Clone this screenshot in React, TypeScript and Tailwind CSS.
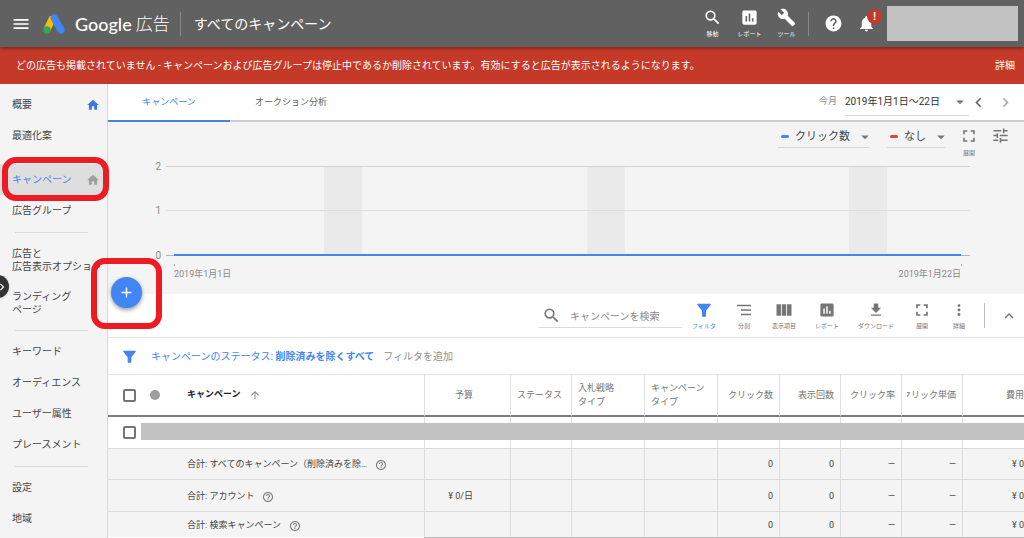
import React from "react";
import {
  MdAdd,
  MdArrowDropDown,
  MdArrowUpward,
  MdAssessment,
  MdBuild,
  MdChevronLeft,
  MdChevronRight,
  MdExpandLess,
  MdFileDownload,
  MdFullscreen,
  MdHelp,
  MdHelpOutline,
  MdHome,
  MdMenu,
  MdMoreVert,
  MdNotifications,
  MdSearch,
  MdTune,
  MdViewColumn,
} from "react-icons/md";

function AdsLogo() {
  return (
    <svg viewBox="0 0 22 20" className="h-5 w-[22px]" aria-hidden="true">
      <path d="M10 3.4 3.9 15.6" stroke="#fbbc04" strokeWidth="7" />
      <path d="M11.2 4.1 18 16" stroke="#4285f4" strokeWidth="7.2" strokeLinecap="round" />
      <circle cx="3.9" cy="16" r="3.7" fill="#34a853" />
    </svg>
  );
}

function Funnel({ className }: { className: string }) {
  return (
    <svg viewBox="0 0 14 14" className={className} fill="currentColor" aria-hidden="true">
      <path d="M.8.8h12.4c.6 0 .8.6.5 1L9 7.7V13c0 .5-.3.8-.7.8H5.8c-.5 0-.8-.3-.8-.8V7.7L.3 1.8C0 1.4.2.8.8.8z" />
    </svg>
  );
}

function SegmentIcon() {
  return (
    <svg viewBox="0 0 16 16" className="size-4" stroke="currentColor" strokeWidth="1.6" aria-hidden="true">
      <path d="M1 3.5h14M5 8h10M5 12.5h10" />
    </svg>
  );
}

type NavItem = { lines: string[]; home?: boolean; active?: boolean };

const navGroups: NavItem[][] = [
  [{ lines: ["概要"], home: true }, { lines: ["最適化案"] }],
  [{ lines: ["キャンペーン"], home: true, active: true }, { lines: ["広告グループ"] }],
  [{ lines: ["広告と", "広告表示オプション"] }, { lines: ["ランディング", "ページ"] }],
  [
    { lines: ["キーワード"] },
    { lines: ["オーディエンス"] },
    { lines: ["ユーザー属性"] },
    { lines: ["プレースメント"] },
  ],
  [{ lines: ["設定"] }, { lines: ["地域"] }],
];

function HeaderTool({ label, children }: { label: string; children: React.ReactNode }) {
  return (
    <button className="flex w-[37px] flex-col items-center gap-[2px] whitespace-nowrap text-[6px] leading-[10px]">
      {children}
      {label}
    </button>
  );
}

function Header() {
  return (
    <header className="relative z-10 flex h-[47px] items-center bg-[#616161] text-white shadow-[0_1px_4px_rgba(0,0,0,0.45)]">
      <button aria-label="メニュー" className="ml-[11px]">
        <MdMenu className="size-5" />
      </button>
      <a href="#" className="ml-3 flex items-center">
        <AdsLogo />
        <span className="ml-[10px] font-[Lato,sans-serif] text-[18px] leading-6 font-medium">Google</span>
        <span className="ml-1 text-[17px] leading-6 font-light">広告</span>
      </a>
      <div className="ml-[10px] h-6 w-px bg-[#8a8a8a]" />
      <h1 className="ml-[13px] text-[14px] leading-6 whitespace-nowrap">すべてのキャンペーン</h1>
      <div className="ml-auto flex items-center">
        <HeaderTool label="移動">
          <MdSearch className="size-[19px]" />
        </HeaderTool>
        <HeaderTool label="レポート">
          <MdAssessment className="size-[19px]" />
        </HeaderTool>
        <HeaderTool label="ツール">
          <MdBuild className="size-[19px]" />
        </HeaderTool>
        <div className="ml-[3px] h-6 w-px bg-[#8a8a8a]" />
        <button aria-label="ヘルプ" className="ml-[15px]">
          <MdHelp className="size-[19px]" />
        </button>
        <button aria-label="通知" className="relative ml-[14px]">
          <MdNotifications className="size-[19px]" />
          <span className="absolute -top-[5px] left-[10px] flex size-[15px] items-center justify-center rounded-full bg-[#c53929] text-[10px] font-bold leading-none">
            !
          </span>
        </button>
        <div className="mr-[6px] ml-[11px] h-[35px] w-[131px] bg-[#c2c2c2]" />
      </div>
    </header>
  );
}

function Sidebar() {
  return (
    <nav className="relative w-[108px] shrink-0 border-r border-[#d8d8d8] bg-[#f4f4f4] pt-[5px] text-[10px] leading-[13px] text-[#444]">
      {navGroups.map((group, g) => (
        <div key={g}>
          {g === 1 && <div className="h-[13px]" />}
          {g > 1 && (
            <div className="flex h-3 items-center pr-[19px] pl-[15px]">
              <div className="h-px w-full bg-[#d9d9d9]" />
            </div>
          )}
          {group.map((item) => (
            <a
              key={item.lines[0]}
              href="#"
              className={`flex items-center justify-between pr-[7px] pl-3 ${
                item.lines.length > 1 ? "h-[43px]" : "h-[31px]"
              } ${item.active ? "bg-[#dedede] text-[#4285f4]" : ""}`}
            >
              <span className="overflow-hidden whitespace-nowrap">
                {item.lines.map((line) => (
                  <span key={line} className="block">
                    {line}
                  </span>
                ))}
              </span>
              {item.home && (
                <MdHome className={`size-[14px] ${item.active ? "text-[#9e9e9e]" : "text-[#3b78e7]"}`} />
              )}
            </a>
          ))}
        </div>
      ))}
      <div className="pointer-events-none absolute top-[73px] left-[2px] h-[44px] w-[107px] rounded-[14px] border-6 border-[#ed1c24]" />
      <button
        aria-label="ナビゲーションを開閉"
        className="absolute top-[191px] -left-[14px] flex size-[23px] items-center justify-end rounded-full bg-[#333] text-white shadow"
      >
        <MdChevronRight className="size-[14px]" />
      </button>
    </nav>
  );
}

function Tabs() {
  return (
    <div className="flex h-[38px] items-stretch border-b-2 border-[#cfcfcf] bg-white text-[9px] text-[#616161]">
      <button className="-mb-[2px] w-[122px] border-b-2 border-[#4a80dc] pt-[2px] text-[#4285f4]">キャンペーン</button>
      <button className="w-[122px] pt-[2px]">オークション分析</button>
      <div className="ml-auto flex items-center">
        <span className="text-[#888]">今月</span>
        <button className="ml-2 flex h-[27px] w-[124px] items-center justify-between border-b border-[#d5d5d5] text-[10px] whitespace-nowrap text-[#333]">
          2019年1月1日～22日
          <MdArrowDropDown className="size-[18px] text-[#757575]" />
        </button>
        <button aria-label="前の期間" className="text-[#616161]">
          <MdChevronLeft className="size-[19px]" />
        </button>
        <button aria-label="次の期間" className="mr-[9px] ml-2 text-[#aaa]">
          <MdChevronRight className="size-[19px]" />
        </button>
      </div>
    </div>
  );
}

function MetricSelect({ label, value, swatch, width }: { label: string; value: string; swatch: string; width: string }) {
  return (
    <label className={`relative flex h-[22px] items-center border-b border-[#d5d5d5] ${width}`}>
      <span className={`ml-[3px] h-[3px] w-2 shrink-0 rounded-sm ${swatch}`} />
      <select aria-label={label} className="w-full appearance-none bg-transparent pl-[6px] text-[11px] leading-4 text-[#444] outline-none">
        <option>{value}</option>
      </select>
      <MdArrowDropDown className="pointer-events-none absolute -right-[5px] size-[18px] text-[#757575]" />
    </label>
  );
}

const weekends = [216, 479, 741];

function ChartPanel() {
  return (
    <section className="bg-[#f4f4f4]">
      <div className="flex h-[34px] items-start justify-end pt-[4px] pr-[14px] text-[#757575]">
        <MetricSelect label="指標 1" value="クリック数" swatch="bg-[#4285f4]" width="w-[91px]" />
        <div className="w-[18px]" />
        <MetricSelect label="指標 2" value="なし" swatch="bg-[#db4437]" width="w-[58px]" />
        <button className="ml-[14px] flex flex-col items-center text-[6px] leading-[8px]">
          <MdFullscreen className="size-5" />
          <span className="mt-[3px]">展開</span>
        </button>
        <button aria-label="グラフの設定" className="ml-[12px]">
          <MdTune className="size-[19px]" />
        </button>
      </div>
      <svg viewBox="0 0 916 138" className="block w-full" role="img" aria-label="クリック数の推移">
        {weekends.map((x) => (
          <rect key={x} x={x} y="11" width="38" height="88" fill="#eaeaea" />
        ))}
        <path d="M58 10.5h804" stroke="#d2d2d2" />
        <path d="M58 54.5h804" stroke="#dedede" />
        <path d="M58 99.5h804" stroke="#b5b5b5" />
        <path d="M66 99h787" stroke="#4285f4" strokeWidth="2" />
        <path d="M66.500 108v2M853.500 108v2" stroke="#aaa" />
        <g fill="#8a8a8a" fontSize="10">
          <text x="53" y="14" textAnchor="end">2</text>
          <text x="53" y="58" textAnchor="end">1</text>
          <text x="53" y="103" textAnchor="end">0</text>
          <text x="66" y="121" fontSize="9">2019年1月1日</text>
          <text x="853" y="121" fontSize="9" textAnchor="end">2019年1月22日</text>
        </g>
      </svg>
    </section>
  );
}

const actions = [
  { label: "フィルタ", width: "w-10", icon: <Funnel className="my-[1px] size-[14px]" />, active: true },
  { label: "分割", width: "w-10", icon: <SegmentIcon /> },
  { label: "表示項目", width: "w-10", icon: <MdViewColumn className="size-4 scale-125" /> },
  { label: "レポート", width: "w-[46px]", icon: <MdAssessment className="size-4 scale-110" /> },
  { label: "ダウンロード", width: "w-[52px]", icon: <MdFileDownload className="size-4 scale-110" /> },
  { label: "展開", width: "w-10", icon: <MdFullscreen className="size-4 scale-125" /> },
  { label: "詳細", width: "w-[34px]", icon: <MdMoreVert className="size-4 scale-110" /> },
];

function Toolbar() {
  return (
    <div className="relative flex h-11 items-center border-b border-[#e2e2e2] bg-white text-[#757575]">
      <label className="ml-auto flex h-[25px] w-[143px] items-center border-b border-[#dcdcdc]">
        <MdSearch className="ml-[3px] size-[19px] shrink-0" />
        <input
          aria-label="キャンペーンを検索"
          placeholder="キャンペーンを検索"
          className="ml-[9px] w-full min-w-0 pt-1 text-[10px] leading-4 outline-none placeholder:text-[#888]"
        />
      </label>
      <div className="ml-[2px] flex">
        {actions.map((a) => (
          <button
            key={a.label}
            className={`flex flex-col items-center gap-1 text-[6px] leading-[8px] whitespace-nowrap ${a.width} ${
              a.active ? "text-[#4285f4]" : ""
            }`}
          >
            {a.icon}
            {a.label}
          </button>
        ))}
      </div>
      <div className="ml-2 h-[25px] w-px bg-[#bdbdbd]" />
      <button aria-label="折りたたむ" className="mr-[6px] ml-[15px]">
        <MdExpandLess className="size-[18px]" />
      </button>
      <button
        aria-label="新規作成"
        className="absolute -top-[17px] left-[3px] flex size-[31px] items-center justify-center rounded-full bg-[#4285f4] text-white shadow-[0_2px_4px_rgba(0,0,0,0.4)]"
      >
        <MdAdd className="size-[17px]" />
      </button>
      <div className="pointer-events-none absolute -top-[36px] -left-[17px] size-[71px] rounded-[14px] border-6 border-[#ed1c24]" />
    </div>
  );
}

function FilterBar() {
  return (
    <div className="flex h-9 items-center bg-white text-[10px] whitespace-nowrap">
      <Funnel className="ml-[15px] size-[13px] text-[#4285f4]" />
      <button className="ml-[15px] text-[#4285f4]">
        キャンペーンのステータス: <b>削除済みを除くすべて</b>
      </button>
      <button className="ml-[9px] text-[#8f8f8f]">フィルタを追加</button>
    </div>
  );
}

const columns = [
  { lines: ["予算"], width: "w-[86px]", pad: "pr-[37px] text-right" },
  { lines: ["ステータス"], width: "w-[61px]", pad: "pl-[6px]" },
  { lines: ["入札戦略", "タイプ"], width: "w-[73px]", pad: "pl-[6px]" },
  { lines: ["キャンペーン", "タイプ"], width: "w-[73px]", pad: "pl-[6px]" },
  { lines: ["クリック数"], width: "w-[62px]", pad: "pr-[6px] text-right" },
  { lines: ["表示回数"], width: "w-[61px]", pad: "pr-[6px] text-right" },
  { lines: ["クリック率"], width: "w-[61px]", pad: "pr-[6px] text-right" },
  { lines: ["クリック単価"], width: "w-[61px]", pad: "pr-[6px] text-right" },
  { lines: ["費用"], width: "w-[62px]", pad: "text-right" },
];

const totals = [
  { name: "合計: すべてのキャンペーン（削除済みを除…", height: "h-[31px]", cells: ["", "", "", "", "0", "0", "—", "—", "¥ 0"] },
  { name: "合計: アカウント", height: "h-8", cells: ["¥ 0/日", "", "", "", "0", "0", "—", "—", "¥ 0"] },
  { name: "合計: 検索キャンペーン", height: "h-[26px]", cells: ["", "", "", "", "0", "0", "—", "—", "¥ 0"] },
];

function Check({ label }: { label: string }) {
  return (
    <input
      type="checkbox"
      aria-label={label}
      className="ml-[15px] block size-[13px] shrink-0 appearance-none rounded-[2px] border-2 border-[#757575] bg-white checked:bg-[#4285f4]"
    />
  );
}

function CampaignTable() {
  return (
    <table className="w-full table-fixed border-separate border-spacing-0 text-[9px] text-[#444]">
      <thead>
        <tr className="h-[43px] text-[#757575]">
          <th className="border-t border-b-2 border-t-[#e2e2e2] border-b-[#7d7d7d] p-0">
            <div className="flex items-center">
              <Check label="すべて選択" />
              <span className="ml-[14px] size-[10px] rounded-full bg-[#9e9e9e]" />
              <span className="ml-[27px] font-bold text-[#222]">キャンペーン</span>
              <MdArrowUpward className="ml-2 size-3 text-[#8a8a8a]" />
            </div>
          </th>
          {columns.map((c) => (
            <th
              key={c.lines[0]}
              className={`border-t border-b-2 border-l border-t-[#e2e2e2] border-b-[#7d7d7d] border-l-[#e0e0e0] py-0 text-left font-normal ${c.width} ${c.pad}`}
            >
              <div className={`flex overflow-hidden ${c.pad.includes("text-right") ? "justify-end" : ""} ${c.lines[0] === "クリック単価" ? "ml-[5px]" : ""}`}>
                <span className="leading-[14px] whitespace-nowrap">
                  {c.lines.map((l) => (
                    <span key={l} className="block">
                      {l}
                    </span>
                  ))}
                </span>
              </div>
            </th>
          ))}
        </tr>
      </thead>
      <tbody>
        <tr className="h-[31px]">
          <td className="relative p-0">
            <Check label="キャンペーンを選択" />
            <div className="absolute top-[6px] left-[33px] h-[17px] w-screen bg-[#c2c2c2]" />
          </td>
          {columns.map((c) => (
            <td key={c.lines[0]} className="border-l border-[#e0e0e0] p-0" />
          ))}
        </tr>
        {totals.map((t) => (
          <tr key={t.name} className={`bg-[#f4f4f4] ${t.height}`}>
            <td className="border-t border-[#dcdcdc] p-0 pt-[2px]">
              <div className="flex items-center pl-[79px] whitespace-nowrap">
                {t.name}
                <MdHelpOutline className="ml-2 size-3 shrink-0 text-[#757575]" />
              </div>
            </td>
            {t.cells.map((v, i) => (
              <td key={i} className={`border-t border-l border-[#dcdcdc] pt-[2px] pb-0 whitespace-nowrap ${columns[i].pad}`}>
                {v}
              </td>
            ))}
          </tr>
        ))}
      </tbody>
    </table>
  );
}

export default function App() {
  return (
    <div className="flex min-h-screen flex-col overflow-hidden bg-white font-[Roboto,'Noto_Sans_CJK_JP',sans-serif]">
      <Header />
      <div className="flex h-[37px] items-center justify-between bg-[#c53929] pr-[9px] pl-4 text-[10px] text-white">
        <p className="whitespace-nowrap">
          どの広告も掲載されていません - キャンペーンおよび広告グループは停止中であるか削除されています。有効にすると広告が表示されるようになります。
        </p>
        <a href="#">詳細</a>
      </div>
      <div className="flex flex-1">
        <Sidebar />
        <main className="min-w-0 flex-1">
          <Tabs />
          <ChartPanel />
          <Toolbar />
          <FilterBar />
          <CampaignTable />
          <div className="ml-[316px] h-px bg-[#bdbdbd]" />
        </main>
      </div>
    </div>
  );
}
